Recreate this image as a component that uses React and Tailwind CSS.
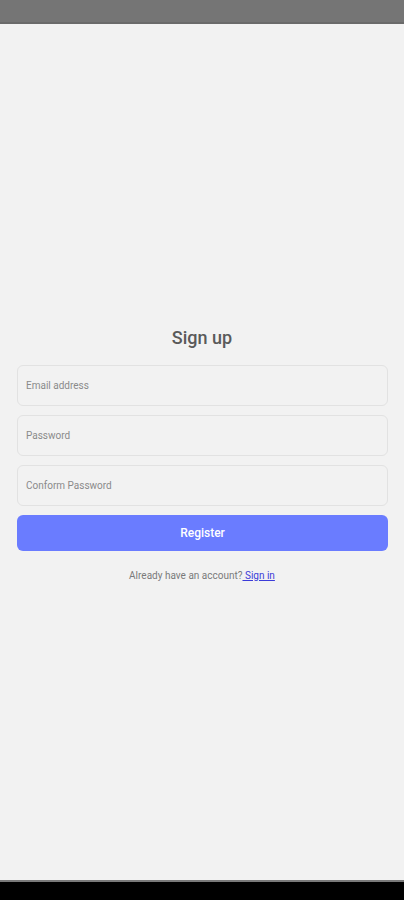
export default function App() {
  const font = { fontFamily: 'Roboto, "Liberation Sans", sans-serif' };
  return (
    <div className="w-[404px] h-[900px] flex flex-col bg-[#f2f2f2]" style={font}>
      <div className="h-[24px] bg-[#757575] border-b-[2px] border-[#6a6a6a]" />
      <div className="flex-1 flex flex-col">
        <div className="h-[302px]" />
        <h1 className="text-center text-[18px] leading-[24px] font-medium text-[#5a5a5a]">Sign up</h1>
        <div className="flex flex-col gap-[9px] pl-[17px] pr-[16px] mt-[15px]">
          {["Email address", "Password", "Conform Password"].map((p) => (
            <div key={p} className="h-[41px] rounded-[6px] border border-[#e2e2e2] bg-[#f2f2f2] flex items-center px-[8px] text-[10px] text-[#8a8a8a]">
              {p}
            </div>
          ))}
          <button className="h-[36px] rounded-[6px] bg-[#6a7cff] text-white text-[12px] font-medium">Register</button>
        </div>
        <p className="text-center text-[10px] text-[#7a7a7a] mt-[17px]">
          Already have an account?<span className="text-[#3b3bd9] underline"> Sign in</span>
        </p>
      </div>
      <div className="h-[20px] bg-black border-t-[2px] border-[#7a7a7a]" />
    </div>
  );
}
